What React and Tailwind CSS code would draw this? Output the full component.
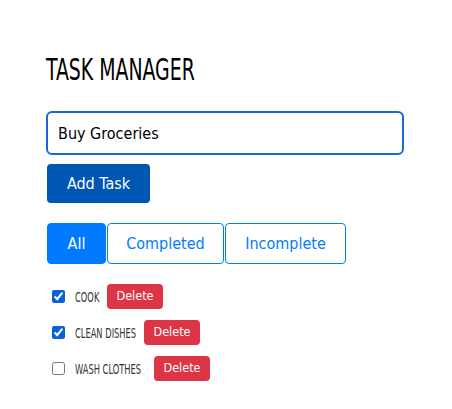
import React, { useState } from 'react';

// box widths keep the narrow task labels from taking their unscaled width
const initialTasks = [
  { id: 1, text: 'Cook', done: true, box: 'w-[22px]' },
  { id: 2, text: 'Clean Dishes', done: true, box: 'w-[59px]' },
  { id: 3, text: 'Wash Clothes', done: false, box: 'w-[69px]' },
];

const filters = ['All', 'Completed', 'Incomplete'];

export default function App() {
  const [tasks, setTasks] = useState(initialTasks);
  const [value, setValue] = useState('Buy Groceries');
  const [filter, setFilter] = useState('All');

  const toggle = (id) =>
    setTasks(tasks.map((t) => (t.id === id ? { ...t, done: !t.done } : t)));
  const remove = (id) => setTasks(tasks.filter((t) => t.id !== id));

  return (
    <div className="min-h-screen bg-white px-[46px] pt-[53px] font-['DejaVu_Sans_Condensed','DejaVu_Sans',sans-serif]">
      <h1 className="h-[34px] origin-left scale-x-[0.7] whitespace-nowrap font-['DejaVu_Sans_Condensed',sans-serif] text-[30px] leading-[34px] uppercase text-black">
        Task Manager
      </h1>

      <input
        value={value}
        onChange={(e) => setValue(e.target.value)}
        className="mt-[24px] block h-[44px] w-[358px] rounded-[6px] border-2 border-[#1a66d9] px-[10px] text-[16px] text-black outline-none"
      />

      <button className="mt-[9px] ml-px h-[39px] w-[103px] rounded-[4px] bg-[#0056b3] text-[16px] text-white">
        Add Task
      </button>

      <div className="mt-[20px] ml-px flex gap-px">
        {filters.map((f) => (
          <button
            key={f}
            onClick={() => setFilter(f)}
            className={
              f === filter
                ? 'h-[41px] w-[59px] rounded-[4px] border border-[#007bff] bg-[#007bff] text-[16px] text-white'
                : f === 'Completed'
                ? 'h-[41px] w-[117px] rounded-[4px] border border-[#007bff] bg-white text-[16px] text-[#007bff]'
                : 'h-[41px] w-[121px] rounded-[4px] border border-[#007bff] bg-white text-[16px] text-[#007bff]'
            }
          >
            {f}
          </button>
        ))}
      </div>

      <ul className="mt-[20px] flex flex-col gap-[11px]">
        {tasks.map((t) => (
          <li key={t.id} className="flex h-[25px] items-center">
            <input
              type="checkbox"
              checked={t.done}
              onChange={() => toggle(t.id)}
              className="ml-[6px] h-[13px] w-[13px] accent-[#0b61d8]"
            />
            <span className={`ml-[10px] inline-block ${t.box}`}>
              <span className="inline-block origin-left scale-x-[0.66] whitespace-nowrap font-['DejaVu_Sans_Condensed',sans-serif] text-[14px] uppercase text-[#333]">
                {t.text}
              </span>
            </span>
            <button
              onClick={() => remove(t.id)}
              className="ml-[10px] h-[25px] w-[56px] rounded-[4px] bg-[#dc3545] text-[12.5px] text-white"
            >
              Delete
            </button>
          </li>
        ))}
      </ul>
    </div>
  );
}
